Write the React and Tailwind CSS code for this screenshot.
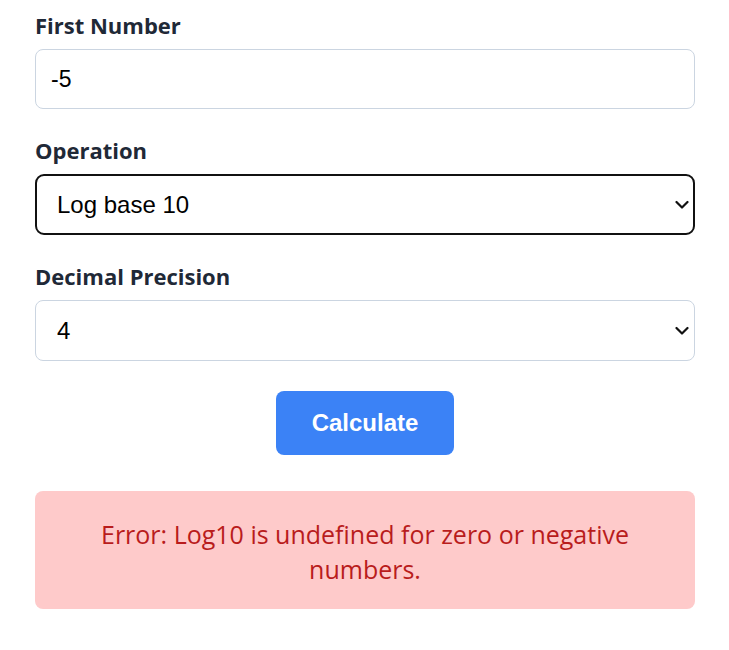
import { useState } from 'react';

const labelCls =
  "block mb-[9px] text-[22px] leading-[30px] font-bold text-[#1f2937] font-['Open_Sans',sans-serif]";

function Chevron() {
  return (
    <svg
      className="pointer-events-none absolute right-[6px] top-1/2 -translate-y-1/2"
      width="14"
      height="9"
      viewBox="0 0 14 9"
      fill="none"
    >
      <path d="M1.5 1.5 L7 7 L12.5 1.5" stroke="#111" strokeWidth="2.2" strokeLinecap="round" strokeLinejoin="round" />
    </svg>
  );
}

export default function App() {
  const [first, setFirst] = useState('-5');
  const [op, setOp] = useState('log10');
  const [precision, setPrecision] = useState('4');

  return (
    <div className="min-h-screen bg-white">
      <div className="w-[660px] ml-[35px] pt-[10px]">
        {/* First number */}
        <div className="mb-[26px]">
          <label className={labelCls}>First Number</label>
          <input
            type="text"
            value={first}
            onChange={(e) => setFirst(e.target.value)}
            className="block w-full h-[60px] px-[15px] text-[23px] text-black border border-[#cbd5e1] rounded-lg bg-white outline-none font-['Liberation_Sans',Arial,sans-serif]"
          />
        </div>

        {/* Operation */}
        <div className="mb-[26px]">
          <label className={labelCls}>Operation</label>
          <div className="relative">
            <select
              value={op}
              onChange={(e) => setOp(e.target.value)}
              className="appearance-none block w-full h-[61px] pl-[20px] pr-[30px] text-[24px] text-black border-2 border-[#111111] rounded-[9px] bg-white outline-none font-['Liberation_Sans',Arial,sans-serif]"
            >
              <option value="add">Addition</option>
              <option value="log10">Log base 10</option>
            </select>
            <Chevron />
          </div>
        </div>

        {/* Precision */}
        <div>
          <label className={labelCls}>Decimal Precision</label>
          <div className="relative">
            <select
              value={precision}
              onChange={(e) => setPrecision(e.target.value)}
              className="appearance-none block w-full h-[61px] pl-[21px] pr-[30px] text-[24px] text-black border border-[#cbd5e1] rounded-lg bg-white outline-none font-['Liberation_Sans',Arial,sans-serif]"
            >
              <option value="2">2</option>
              <option value="4">4</option>
              <option value="6">6</option>
            </select>
            <Chevron />
          </div>
        </div>

        <div className="flex justify-center mt-[30px]">
          <button className="w-[178px] h-[64px] rounded-lg bg-[#3b82f6] text-white text-[24px] font-bold font-['Liberation_Sans',Arial,sans-serif]">
            Calculate
          </button>
        </div>

        <div className="mt-[36px] h-[118px] rounded-lg bg-[#fecaca] flex items-center justify-center px-10">
          <p className="pt-[4px] text-center text-[25px] leading-[35px] text-[#b91c1c] font-['Open_Sans',sans-serif]">
            Error: Log10 is undefined for zero or negative numbers.
          </p>
        </div>
      </div>
    </div>
  );
}
